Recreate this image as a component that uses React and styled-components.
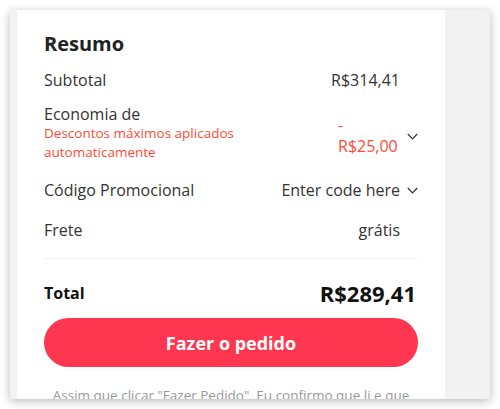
import React from "react";
import styled, { createGlobalStyle } from "styled-components";

const GlobalStyle = createGlobalStyle`
  html, body {
    margin: 0;
    padding: 0;
    background: #ffffff;
    font-family: "Open Sans", "Noto Sans", sans-serif;
  }
`;

const Chevron = () => (
  <svg width="11" height="7" viewBox="0 0 11 7" fill="none">
    <polyline points="0.8,1 5.5,5.8 10.2,1" stroke="#333" strokeWidth="1.2" />
  </svg>
);

const App = () => {
  return (
    <>
      <GlobalStyle />
      <Frame>
        <Panel>
          <Heading>Resumo</Heading>

          <Row $top={13}>
            <Label>Subtotal</Label>
            <Value $pad>R$314,41</Value>
          </Row>

          <Row $top={14}>
            <LabelBlock>
              <Label>Economia de</Label>
              <Note>Descontos máximos aplicados automaticamente</Note>
            </LabelBlock>
            <Discount>
              <DiscountValue>- R$25,00</DiscountValue>
              <IconBox>
                <Chevron />
              </IconBox>
            </Discount>
          </Row>

          <Row $top={18}>
            <Label>Código Promocional</Label>
            <Value>
              Enter code here
              <IconBox>
                <Chevron />
              </IconBox>
            </Value>
          </Row>

          <Row $top={20}>
            <Label>Frete</Label>
            <Value $pad>grátis</Value>
          </Row>

          <Divider />

          <TotalRow>
            <TotalLabel>Total</TotalLabel>
            <TotalValue>R$289,41</TotalValue>
          </TotalRow>

          <OrderButton>Fazer o pedido</OrderButton>

          <Footer>
            Assim que clicar "Fazer Pedido", Eu confirmo que li e que
          </Footer>
        </Panel>
      </Frame>
    </>
  );
};

const Frame = styled.div`
  margin: 10px;
  width: 480px;
  height: 389px;
  background: #f2f2f2;
  box-shadow: 0 2px 9px rgba(0, 0, 0, 0.28);
  overflow: hidden;
  display: flex;
`;

const Panel = styled.div`
  margin-left: 7px;
  width: 428px;
  box-sizing: border-box;
  padding: 21px 27px 0 27px;
  background: #ffffff;
  display: flex;
  flex-direction: column;
  color: #333;

  & > * {
    flex-shrink: 0;
  }
`;

const Heading = styled.h2`
  margin: 0;
  font-size: 20px;
  line-height: 26px;
  font-weight: 700;
  color: #222;
`;

const Row = styled.div`
  display: flex;
  justify-content: space-between;
  align-items: center;
  margin-top: ${(p) => p.$top}px;
`;

const Label = styled.div`
  font-size: 16px;
  line-height: 20px;
  color: #333;
`;

const LabelBlock = styled.div`
  display: flex;
  flex-direction: column;
  width: 200px;
`;

const Note = styled.div`
  font-size: 13.5px;
  line-height: 19px;
  color: #fd4c36;
`;

const Value = styled.div`
  display: flex;
  align-items: center;
  font-size: 16px;
  line-height: 20px;
  color: #333;
  padding-right: ${(p) => (p.$pad ? "18px" : "0")};
`;

const Discount = styled.div`
  display: flex;
  align-items: center;
  margin-top: 6px;
`;

const DiscountValue = styled.div`
  width: 62px;
  font-size: 16px;
  line-height: 21px;
  color: #fd4c36;
`;

const IconBox = styled.span`
  width: 18px;
  display: flex;
  justify-content: flex-end;
  align-items: center;
`;

const Divider = styled.div`
  height: 1px;
  background: #eeeeee;
  margin-top: 18px;
`;

const TotalRow = styled.div`
  display: flex;
  justify-content: space-between;
  align-items: center;
  margin-top: 20px;
  height: 28px;
`;

const TotalLabel = styled.div`
  font-size: 16px;
  font-weight: 700;
  color: #111;
`;

const TotalValue = styled.div`
  font-size: 22px;
  font-weight: 700;
  color: #111;
  margin-right: 2px;
`;

const OrderButton = styled.button`
  margin-top: 11px;
  height: 49px;
  width: 100%;
  border: none;
  border-radius: 25px;
  background: #fe364f;
  color: #ffffff;
  font-family: "Open Sans", "Noto Sans", sans-serif;
  font-size: 18px;
  font-weight: 700;
  cursor: pointer;
`;

const Footer = styled.p`
  margin: 18px 0 0 0;
  text-align: center;
  font-size: 13.5px;
  line-height: 20px;
  color: #999;
  white-space: nowrap;
`;

export default App;
